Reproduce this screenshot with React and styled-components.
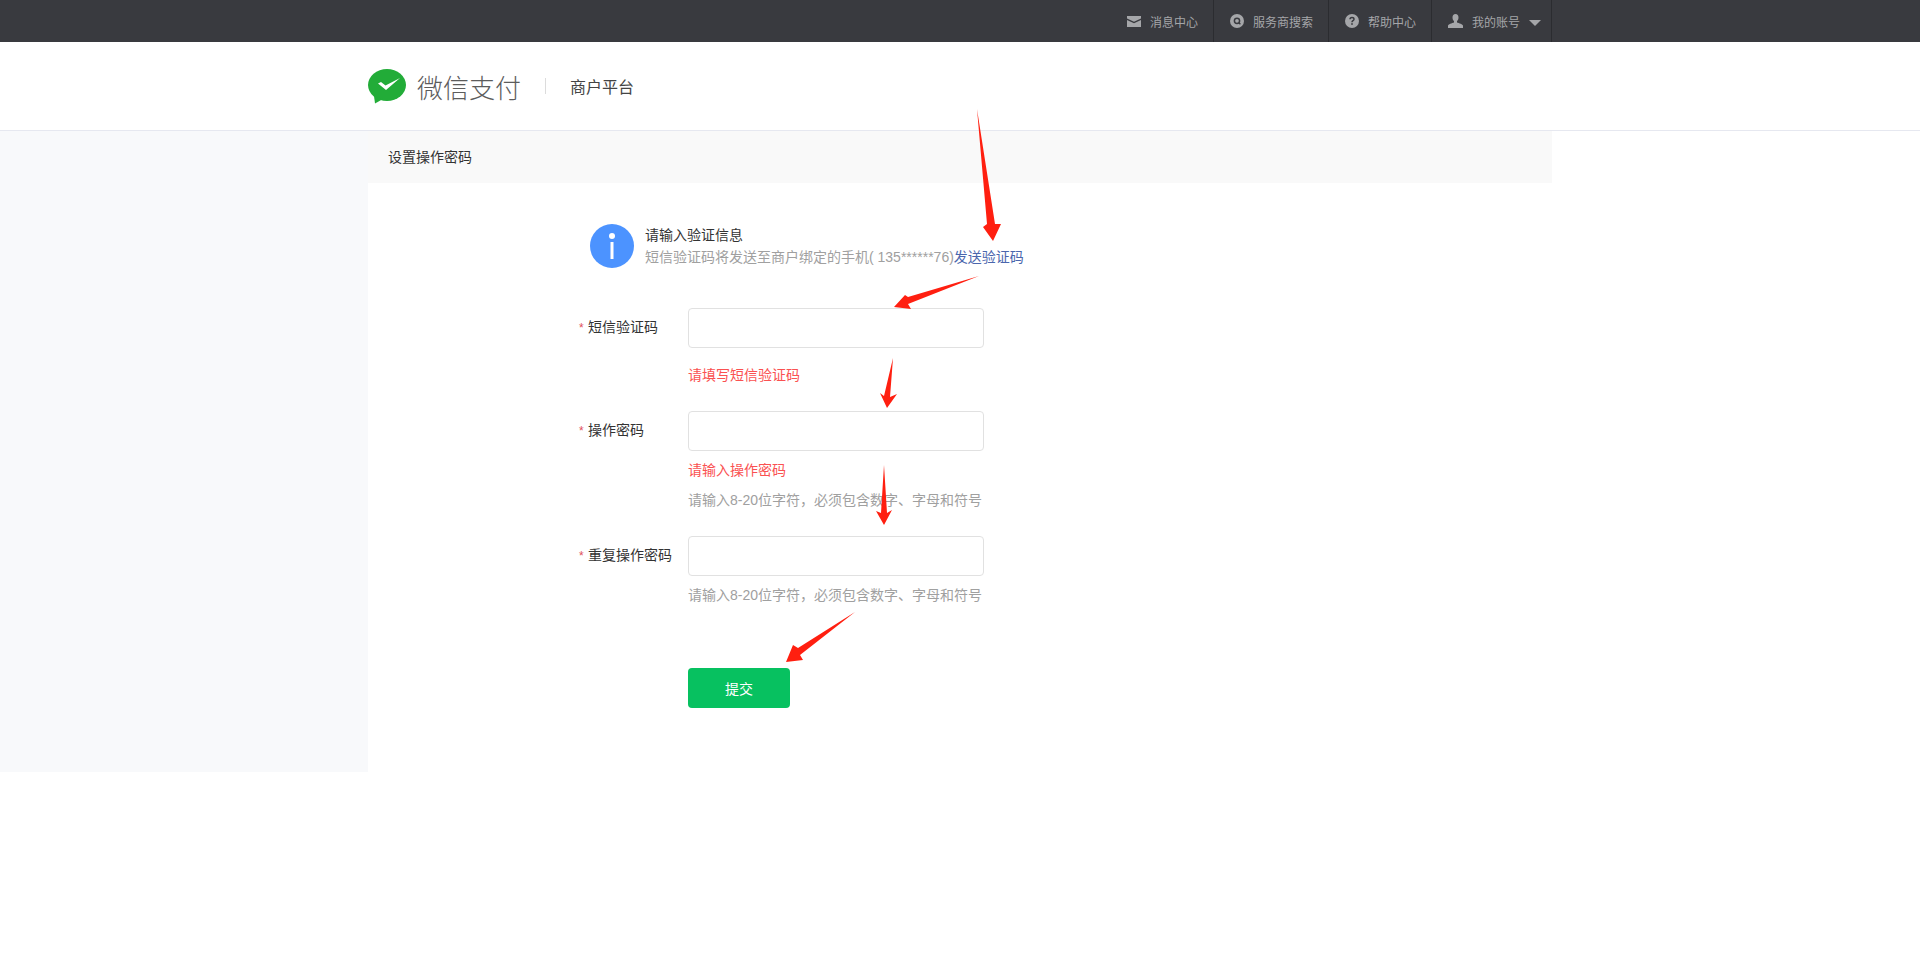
import React from 'react';
import styled, { createGlobalStyle } from 'styled-components';

const GlobalStyle = createGlobalStyle`
	html, body {
		margin: 0;
		padding: 0;
		background: #fff;
		font-family: "Liberation Sans", "Noto Sans CJK SC", sans-serif;
		font-size: 14px;
		color: #333;
	}
`;

const NAV_ITEMS = [
	{ label: '消息中心', icon: <MailIcon /> },
	{ label: '服务商搜索', icon: <SearchIcon /> },
	{ label: '帮助中心', icon: <HelpIcon /> },
];

const ARROWS = [
	'977,109 987,224 983,227 993,241 1001,224 995,224',
	'979,276 908,297 905,295 894,307 911,309 908,304',
	'893,358 884,396 880,393 887,408 897,394 890,397',
	'884,465 881,513 876,511 884,525 892,510 887,513',
	'855,612 798,648 793,645 786,662 803,660 800,655',
];

export default function App() {
	return (
		<Page>
			<GlobalStyle />
			<TopBar>
				<Wrap>
					<Nav>
						{NAV_ITEMS.map((item) => (
							<NavItem key={item.label}>
								{item.icon}
								<span>{item.label}</span>
							</NavItem>
						))}
						<NavItem $last>
							<UserIcon />
							<span>我的账号</span>
							<Caret />
						</NavItem>
					</Nav>
				</Wrap>
			</TopBar>

			<Header>
				<Wrap>
					<Brand>
						<Logo />
						<BrandName>微信支付</BrandName>
						<BrandDivider />
						<Platform>商户平台</Platform>
					</Brand>
				</Wrap>
			</Header>

			<Body>
				<Side />
				<Main>
					<PageTitle>设置操作密码</PageTitle>
					<Form>
						<Notice>
							<InfoIcon />
							<NoticeText>
								<NoticeTitle>请输入验证信息</NoticeTitle>
								<NoticeDesc>
									短信验证码将发送至商户绑定的手机( 135******76)
									<SendLink>发送验证码</SendLink>
								</NoticeDesc>
							</NoticeText>
						</Notice>

						<Field $top={39}>
							<Label>短信验证码</Label>
							<Input />
							<Error $top={17}>请填写短信验证码</Error>
						</Field>

						<Field $top={25}>
							<Label>操作密码</Label>
							<Input type="password" />
							<Error $top={9}>请输入操作密码</Error>
							<Hint $top={10}>请输入8-20位字符，必须包含数字、字母和符号</Hint>
						</Field>

						<Field $top={25}>
							<Label>重复操作密码</Label>
							<Input type="password" />
							<Hint $top={9}>请输入8-20位字符，必须包含数字、字母和符号</Hint>
						</Field>

						<Actions>
							<Submit>提交</Submit>
						</Actions>
					</Form>
				</Main>
				<Side $blank />
			</Body>

			<Arrows viewBox="0 0 1920 969">
				{ARROWS.map((points) => (
					<polygon key={points} points={points} fill="#ff1f10" />
				))}
			</Arrows>
		</Page>
	);
}

function MailIcon() {
	return (
		<svg width="14" height="11" viewBox="0 0 14 11">
			<path d="M0 0h14v2.6L7 5.8 0 2.6z" fill="#a5a6a9" />
			<path d="M0 4l7 3.2L14 4v7H0z" fill="#a5a6a9" />
		</svg>
	);
}

function SearchIcon() {
	return (
		<svg width="14" height="14" viewBox="0 0 14 14">
			<circle cx="7" cy="7" r="7" fill="#a5a6a9" />
			<circle cx="7" cy="6.8" r="2.6" fill="none" stroke="#393a3f" strokeWidth="1.5" />
			<path d="M8.8 8.8l1.6 1.4" stroke="#393a3f" strokeWidth="1.4" />
		</svg>
	);
}

function HelpIcon() {
	return (
		<svg width="14" height="14" viewBox="0 0 14 14">
			<circle cx="7" cy="7" r="7" fill="#a5a6a9" />
			<path
				d="M5 5.3C5 4.2 5.9 3.5 7 3.5s2 .7 2 1.7c0 1.5-2 1.5-2 3"
				fill="none"
				stroke="#393a3f"
				strokeWidth="1.5"
			/>
			<rect x="6.2" y="9.2" width="1.6" height="1.6" fill="#393a3f" />
		</svg>
	);
}

function UserIcon() {
	return (
		<svg width="15" height="14" viewBox="0 0 15 14">
			<path
				d="M7.5 0C9.4 0 10.5 1.4 10.5 3.4c0 1.6-.7 3-1.5 3.7v1.4c1.8.8 6 1.6 6 3.2V14H0v-2.3c0-1.6 4.200-2.400 6-3.200V7.100C5.200 6.400 4.500 5 4.500 3.400 4.500 1.400 5.600 0 7.500 0z"
				fill="#a5a6a9"
			/>
		</svg>
	);
}

function Logo() {
	return (
		<svg width="39" height="35" viewBox="0 0 39 35">
			<ellipse cx="19" cy="16" rx="19" ry="16" fill="#22ac38" />
			<path d="M6 27l1 7.500 8-4.500z" fill="#22ac38" />
			<path d="M10 14.500l3 -1.500 4.500 3.500L32 9l-14 12z" fill="#fff" />
		</svg>
	);
}

function InfoIcon() {
	return (
		<svg width="44" height="44" viewBox="0 0 44 44">
			<circle cx="22" cy="22" r="22" fill="#4c93ff" />
			<circle cx="22" cy="12" r="3" fill="#fff" />
			<rect x="20.500" y="18" width="3" height="17" fill="#fff" />
		</svg>
	);
}

const Page = styled.div`
	position: relative;
	min-height: 969px;
`;

const Wrap = styled.div`
	width: 1184px;
	margin: 0 auto;
`;

const TopBar = styled.div`
	height: 42px;
	background: #393a3f;
`;

const Nav = styled.ul`
	display: flex;
	justify-content: flex-end;
	height: 42px;
	margin: 0;
	padding: 0;
	list-style: none;
`;

const NavItem = styled.li`
	display: flex;
	align-items: center;
	gap: 9px;
	padding: 0 ${(p) => (p.$last ? '10px' : '15px')} 0 16px;
	border-right: 1px solid #2b2c30;
	font-size: 12px;
	color: #a5a6a9;
`;

const Caret = styled.i`
	width: 0;
	height: 0;
	margin-top: 3px;
	border-style: solid;
	border-width: 6px 6px 0;
	border-color: #a5a6a9 transparent transparent;
`;

const Header = styled.div`
	height: 88px;
	border-bottom: 1px solid #e6e8f0;
`;

const Brand = styled.div`
	display: flex;
	align-items: center;
	height: 88px;
`;

const BrandName = styled.span`
	margin-left: 10px;
	font-size: 26px;
	font-weight: 300;
	color: #5c5c5c;
`;

const BrandDivider = styled.i`
	width: 1px;
	height: 16px;
	margin: 0 24px;
	background: #dcdcdc;
`;

const Platform = styled.span`
	font-size: 16px;
	color: #444;
`;

const Body = styled.div`
	display: flex;
`;

const Side = styled.div`
	flex: 1;
	background: ${(p) => (p.$blank ? '#fff' : '#f8f9fb')};
`;

const Main = styled.div`
	width: 1184px;
	background: #fff;
`;

const PageTitle = styled.h2`
	height: 52px;
	margin: 0;
	padding-left: 20px;
	background: #f9f9f9;
	font-size: 14px;
	font-weight: 400;
	line-height: 52px;
	color: #333;
`;

const Form = styled.div`
	padding: 41px 0 64px 211px;
`;

const Notice = styled.div`
	display: flex;
	align-items: center;
	gap: 11px;
	margin-left: 11px;
`;

const NoticeText = styled.div`
	line-height: 22px;
	white-space: nowrap;
`;

const NoticeTitle = styled.div`
	color: #333;
`;

const NoticeDesc = styled.div`
	color: #a0a0a0;
`;

const SendLink = styled.a`
	color: #4a66ad;
	cursor: pointer;
`;

const Field = styled.div`
	display: grid;
	grid-template-columns: 109px 296px;
	align-items: center;
	margin-top: ${(p) => p.$top}px;
`;

const Label = styled.label`
	color: #333;
	line-height: 40px;
	&::before {
		content: '*';
		display: inline-block;
		width: 9px;
		color: #e0505b;
		font-size: 12px;
	}
`;

const Input = styled.input`
	box-sizing: border-box;
	width: 296px;
	height: 40px;
	padding: 0 10px;
	border: 1px solid #e1e1e1;
	border-radius: 4px;
	background: #fff;
	outline: none;
`;

const Message = styled.div`
	grid-column: 2;
	margin-top: ${(p) => p.$top}px;
	line-height: 20px;
	white-space: nowrap;
`;

const Error = styled(Message)`
	color: #fa5151;
`;

const Hint = styled(Message)`
	color: #a0a0a0;
`;

const Actions = styled.div`
	margin: 63px 0 0 109px;
`;

const Submit = styled.button`
	display: block;
	width: 102px;
	height: 40px;
	border: 0;
	border-radius: 4px;
	background: #07c160;
	color: #fff;
	font-family: inherit;
	font-size: 14px;
	cursor: pointer;
`;

const Arrows = styled.svg`
	position: absolute;
	top: 0;
	left: 0;
	width: 1920px;
	height: 969px;
	pointer-events: none;
`;
